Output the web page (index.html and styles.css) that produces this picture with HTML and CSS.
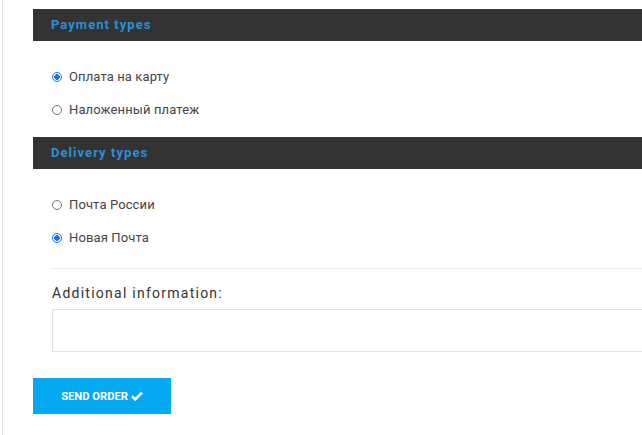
FILE: index.html
```html
<!DOCTYPE html>
<html>
<head>
<meta charset="utf-8">
<link rel="stylesheet" href="styles.css">
</head>
<body>
<div class="page">
  <div class="form">
    <h3 class="section-title">Payment types</h3>
    <div class="options">
      <label class="option"><input type="radio" name="pay" checked><span>Оплата на карту</span></label>
      <label class="option"><input type="radio" name="pay"><span>Наложенный платеж</span></label>
    </div>
    <h3 class="section-title">Delivery types</h3>
    <div class="options">
      <label class="option"><input type="radio" name="del"><span>Почта России</span></label>
      <label class="option"><input type="radio" name="del" checked><span>Новая Почта</span></label>
    </div>
    <div class="extra">
      <div class="extra-label">Additional information:</div>
      <textarea class="extra-input"></textarea>
    </div>
    <button class="send">SEND ORDER <svg class="check" viewBox="0 0 12 10" width="12" height="10"><path d="M1 5.2 L4.3 8.4 L11 1.6" fill="none" stroke="#fff" stroke-width="2.6" stroke-linejoin="miter"/></svg></button>
  </div>
</div>
</body>
</html>
```
FILE: styles.css
```css
html, body {
  margin: 0;
  padding: 0;
  background: #fff;
  overflow: hidden;
}
body {
  font-family: Roboto, "Liberation Sans", sans-serif;
  color: #333;
  padding-left: 2px;
}
.page {
  border-left: 1px solid #e4e4e4;
  min-height: 435px;
  box-sizing: border-box;
  padding-left: 30px;
  padding-top: 9px;
}
.section-title {
  margin: 0;
  height: 32px;
  line-height: 32px;
  background: #333333;
  color: #2c8fd6;
  font-size: 13px;
  font-weight: 700;
  letter-spacing: 1.05px;
  padding-left: 18px;
}
.options {
  padding: 19px 0 11px 19px;
  display: flex;
  flex-direction: column;
}
.option {
  display: flex;
  align-items: center;
  height: 33px;
  font-size: 13px;
  letter-spacing: 0.12px;
  color: #444;
}
.option input {
  appearance: none;
  -webkit-appearance: none;
  margin: 0 7px 0 0;
  width: 10px;
  height: 10px;
  border: 1px solid #777;
  border-radius: 50%;
  box-sizing: border-box;
  background: #fff;
}
.option input:checked {
  border-color: #1a73e8;
  background: radial-gradient(circle, #1a73e8 0 2.6px, #fff 3px);
}
.extra {
  margin-left: 19px;
  border-top: 1px solid #ebebeb;
  margin-top: 3px;
  padding-top: 15px;
}
.extra-label {
  font-size: 14px;
  letter-spacing: 1.25px;
  color: #333;
  line-height: 18px;
  margin-bottom: 7px;
}
.extra-input {
  display: block;
  width: 100%;
  height: 43px;
  box-sizing: border-box;
  border: 1px solid #e0e0e0;
  border-right: 0;
  resize: none;
  margin: 0;
}
.send {
  margin-top: 26px;
  width: 138px;
  height: 36px;
  background: #05a9f2;
  color: #fff;
  border: 0;
  font-family: Roboto, "Liberation Sans", sans-serif;
  font-weight: 700;
  font-size: 11.2px;
  display: flex;
  align-items: center;
  justify-content: center;
  gap: 3px;
  padding: 0;
}
.check {
  display: block;
}
```
